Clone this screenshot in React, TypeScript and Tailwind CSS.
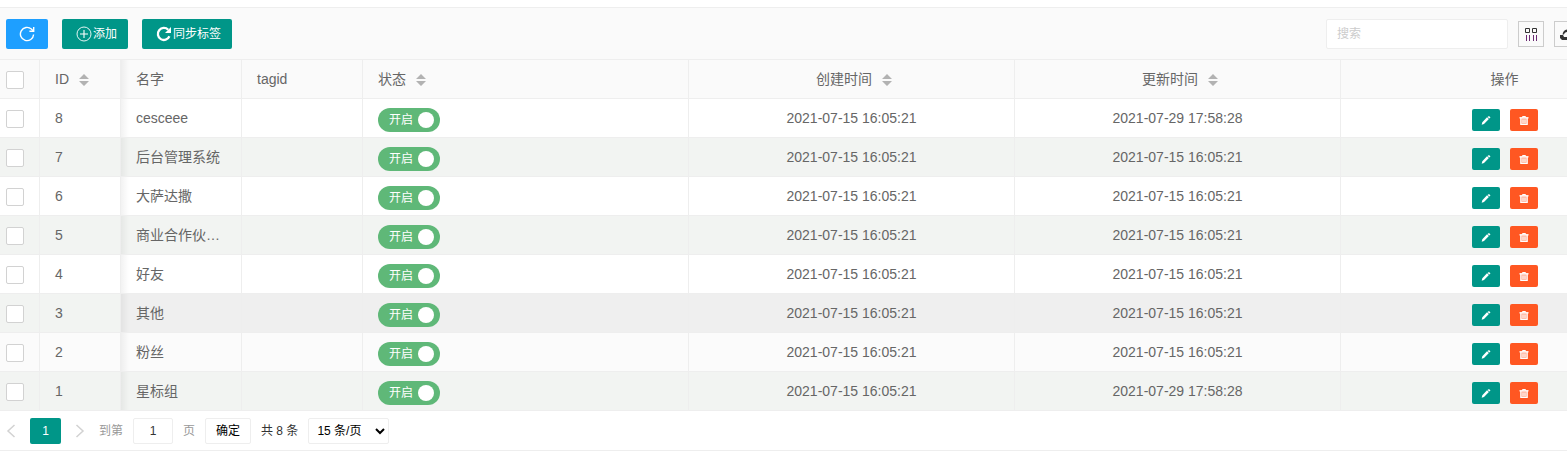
import React, { useState } from "react";

const initialRows = [
  { id: 8, name: "cesceee", created: "2021-07-15 16:05:21", updated: "2021-07-29 17:58:28" },
  { id: 7, name: "后台管理系统", created: "2021-07-15 16:05:21", updated: "2021-07-15 16:05:21" },
  { id: 6, name: "大萨达撒", created: "2021-07-15 16:05:21", updated: "2021-07-15 16:05:21" },
  { id: 5, name: "商业合作伙伴组", created: "2021-07-15 16:05:21", updated: "2021-07-15 16:05:21" },
  { id: 4, name: "好友", created: "2021-07-15 16:05:21", updated: "2021-07-15 16:05:21" },
  { id: 3, name: "其他", created: "2021-07-15 16:05:21", updated: "2021-07-15 16:05:21" },
  { id: 2, name: "粉丝", created: "2021-07-15 16:05:21", updated: "2021-07-15 16:05:21" },
  { id: 1, name: "星标组", created: "2021-07-15 16:05:21", updated: "2021-07-29 17:58:28" },
];

const cell = "h-[39px] border-r border-b border-[#eee] p-0 font-normal";
const shade = "bg-[linear-gradient(to_right,rgba(0,0,0,0.05),transparent_8px)]";

const rowColor = (id: number) => {
  if (id === 3) return "bg-[#efefef]";
  if (id === 2) return "bg-[#fbfbfb]";
  return id % 2 ? "bg-[#f2f4f2]" : "bg-white";
};

const RefreshIcon = () => (
  <svg width="16" height="16" viewBox="0 0 16 16" fill="none" stroke="currentColor" strokeWidth="1.4">
    <path d="M14.600 8.500a6.600 6.600 0 1 1-2.200-5.400l1.600 1.700" />
    <path d="M14.700 1v4.300h-4.300" />
  </svg>
);

const PlusIcon = () => (
  <svg width="16" height="16" viewBox="0 0 16 16" fill="none" stroke="currentColor">
    <circle cx="8" cy="8" r="7" strokeWidth="0.9" />
    <path d="M8 4v8M4 8h8" strokeWidth="1.1" />
  </svg>
);

const SyncIcon = () => (
  <svg width="16" height="16" viewBox="0 0 16 16" fill="none" stroke="currentColor">
    <path d="M13.400 10.300A6 6 0 1 1 12.200 3.800" strokeWidth="2.3" />
    <path d="M15 1v6H9z" fill="currentColor" stroke="none" />
  </svg>
);

const ColumnsIcon = () => (
  <svg width="14" height="14" viewBox="0 0 14 14" fill="none" stroke="#333">
    <path d="M1.500 1.500h4v4h-4zM8.500 1.500h4v4h-4z" />
    <path d="M2.500 8v6M5.500 8v6M9.500 8v6M12.500 8v6" stroke="#6b2a72" />
  </svg>
);

const ExportIcon = () => (
  <svg width="14" height="14" viewBox="0 0 14 14" fill="#333">
    <path d="M0 8h3l1 2h6l1-2h3v3l-2 2H2l-2-2z" />
    <path d="M2.500 7.500C3 4.500 5 2.500 8 2.500V0.500l4 3.500-4 3.500V5C6 5 4.500 6 4 7.500z" />
  </svg>
);

const PrintIcon = () => (
  <svg width="14" height="14" viewBox="0 0 14 14" fill="none" stroke="#333">
    <path d="M3.500 4.500v-3h7v3M3.500 10.500h-2v-6h11v6h-2M3.500 8.500h7v4h-7z" />
  </svg>
);

const PencilIcon = () => (
  <svg width="10" height="10" viewBox="0 0 10 10" fill="currentColor">
    <path d="M8 0.900L9.500 2.400 8.400 3.500 6.500 1.900zM6 2.300L7.900 4.100 3 9 0.700 9.700 1.300 7.200z" />
  </svg>
);

const TrashIcon = () => (
  <svg width="10" height="10" viewBox="0 0 10 10" fill="none" stroke="currentColor">
    <path d="M3.500 2.500V1.500h3v1" />
    <path d="M0.500 2.800h9" strokeWidth="1.4" />
    <path d="M1.800 3v6.300h6.400V3" fill="currentColor" fillOpacity="0.5" strokeWidth="1.2" />
    <path d="M4 4.500v3.500M6 4.500v3.500" />
  </svg>
);

const SortIcon = () => (
  <svg className="-mr-[5px] ml-2.5 inline-block" width="10" height="12" viewBox="0 0 10 12" fill="#b2b2b2">
    <path d="M0 5L5 0l5 5zM0 7h10l-5 5z" />
  </svg>
);

const Check: React.FC<{ label: string }> = ({ label }) => (
  <input
    type="checkbox"
    aria-label={label}
    className="ml-1.5 block size-[18px] appearance-none rounded-xs border border-[#d2d2d2] bg-white checked:border-[#5fb878] checked:bg-[#5fb878]"
  />
);

const Toggle: React.FC = () => {
  const [on, setOn] = useState(true);
  return (
    <label
      className={`flex h-6 w-[62px] cursor-pointer items-center justify-between rounded-full pr-1.5 pl-[11px] text-xs ${
        on ? "bg-[#5fb878] text-white" : "bg-[#d2d2d2] text-[#999]"
      }`}
    >
      {on ? "开启" : "关闭"}
      <input
        type="checkbox"
        checked={on}
        onChange={() => setOn(!on)}
        className="size-4 appearance-none rounded-full bg-white"
      />
    </label>
  );
};

export default function App() {
  const [rows, setRows] = useState(initialRows);
  const [page, setPage] = useState("1");

  const handleDelete = (id: number) => {
    setRows(rows.filter((row) => row.id !== id));
  };

  return (
    <div className="overflow-hidden bg-white pt-[7px] font-['Liberation_Sans','Noto_Sans_CJK_SC',sans-serif] text-sm text-[#666]">
      <div className="border-y border-[#eee]">
        <div className="min-w-[1669px]">
          <div className="flex h-[52px] items-center justify-between border-b border-[#eee] bg-[#fafafa] pr-[53px] pl-1.5">
            <div className="flex gap-3.5 text-xs text-white">
              <button aria-label="刷新" className="flex h-[30px] w-[42px] items-center justify-center rounded-xs bg-[#1e9fff]">
                <RefreshIcon />
              </button>
              <button className="flex h-[30px] w-[66px] items-center justify-center gap-px rounded-xs bg-[#009688] pl-[3px]">
                <PlusIcon />
                添加
              </button>
              <button className="flex h-[30px] w-[90px] items-center justify-center gap-px rounded-xs bg-[#009688] pl-[3px]">
                <SyncIcon />
                同步标签
              </button>
            </div>
            <div className="flex items-center gap-2.5">
              <input
                type="search"
                aria-label="搜索"
                placeholder="搜索"
                className="h-[30px] w-[182px] rounded-xs border border-[#eee] bg-white px-2.5 text-xs placeholder:text-[#ccc]"
              />
              <button aria-label="筛选列" className="flex size-[26px] items-center justify-center border border-[#ccc]">
                <ColumnsIcon />
              </button>
              <button aria-label="导出" className="flex size-[26px] items-center justify-center border border-[#ccc]">
                <ExportIcon />
              </button>
              <button aria-label="打印" className="flex size-[26px] items-center justify-center border border-[#ccc]">
                <PrintIcon />
              </button>
            </div>
          </div>

          <table className="w-full table-fixed border-separate border-spacing-0">
            <colgroup>
              <col className="w-10" />
              <col className="w-[81px]" />
              <col className="w-[121px]" />
              <col className="w-[121px]" />
              <col className="w-[326px]" />
              <col className="w-[326px]" />
              <col className="w-[326px]" />
              <col />
            </colgroup>
            <thead>
              <tr className="bg-[#fafafa] text-left">
                <th className={`${cell} pt-0.5`}>
                  <Check label="全选" />
                </th>
                <th className={`${cell} pl-[15px]`}>
                  ID
                  <SortIcon />
                </th>
                <th className={`${cell} ${shade} pl-[15px]`}>名字</th>
                <th className={`${cell} pl-[15px]`}>tagid</th>
                <th className={`${cell} pl-[15px]`}>
                  状态
                  <SortIcon />
                </th>
                <th className={`${cell} text-center`}>
                  创建时间
                  <SortIcon />
                </th>
                <th className={`${cell} text-center`}>
                  更新时间
                  <SortIcon />
                </th>
                <th className={`${cell} text-center`}>操作</th>
              </tr>
            </thead>
            <tbody>
              {rows.map((row) => (
                <tr key={row.id} className={rowColor(row.id)}>
                  <td className={`${cell} pt-0.5 ${row.id === 3 ? "bg-[#f2f4f2]" : ""}`}>
                    <Check label={`选择 ${row.id}`} />
                  </td>
                  <td className={`${cell} pl-[15px] ${row.id === 3 ? "bg-[#f2f4f2]" : ""}`}>{row.id}</td>
                  <td className={`${cell} ${shade} truncate px-[15px]`}>{row.name}</td>
                  <td className={cell}></td>
                  <td className={`${cell} pt-1 pl-[15px]`}>
                    <Toggle />
                  </td>
                  <td className={`${cell} text-center`}>{row.created}</td>
                  <td className={`${cell} text-center`}>{row.updated}</td>
                  <td className={`${cell} pt-1`}>
                    <div className="flex justify-center gap-2.5 text-white">
                      <button aria-label="编辑" className="flex h-[22px] w-7 items-center justify-center rounded-xs bg-[#009688]">
                        <PencilIcon />
                      </button>
                      <button
                        aria-label="删除"
                        className="flex h-[22px] w-7 items-center justify-center rounded-xs bg-[#ff5722]"
                        onClick={() => handleDelete(row.id)}
                      >
                        <TrashIcon />
                      </button>
                    </div>
                  </td>
                </tr>
              ))}
            </tbody>
          </table>
        </div>

        <div className="flex h-[39px] items-center gap-2.5 pl-1 text-xs text-[#999]">
          <div className="flex items-center gap-3">
            <button aria-label="上一页" className="text-[#d2d2d2]">
              <svg width="14" height="14" viewBox="0 0 14 14" fill="none" stroke="currentColor" strokeWidth="1.5">
                <path d="M10.500 1L4 7l6.500 6" />
              </svg>
            </button>
            <button className="h-[26px] w-[31px] rounded-xs bg-[#009688] text-white">1</button>
            <button aria-label="下一页" className="text-[#d2d2d2]">
              <svg width="14" height="14" viewBox="0 0 14 14" fill="none" stroke="currentColor" strokeWidth="1.5">
                <path d="M3.500 1L10 7l-6.500 6" />
              </svg>
            </button>
            <label htmlFor="page">到第</label>
          </div>
          <input
            id="page"
            value={page}
            onChange={(e) => setPage(e.target.value)}
            className="h-[26px] w-10 rounded-xs border border-[#eee] bg-white text-center text-[#333]"
          />
          <span>页</span>
          <button className="h-[26px] w-[46px] rounded-xs border border-[#eee] bg-white text-black">确定</button>
          <span className="text-[#333]">共 8 条</span>
          <select aria-label="每页条数" className="h-[26px] w-[81px] rounded-xs border border-[#eee] bg-white pl-1 text-black">
            <option>15 条/页</option>
            <option>30 条/页</option>
            <option>50 条/页</option>
          </select>
        </div>
      </div>
    </div>
  );
}
